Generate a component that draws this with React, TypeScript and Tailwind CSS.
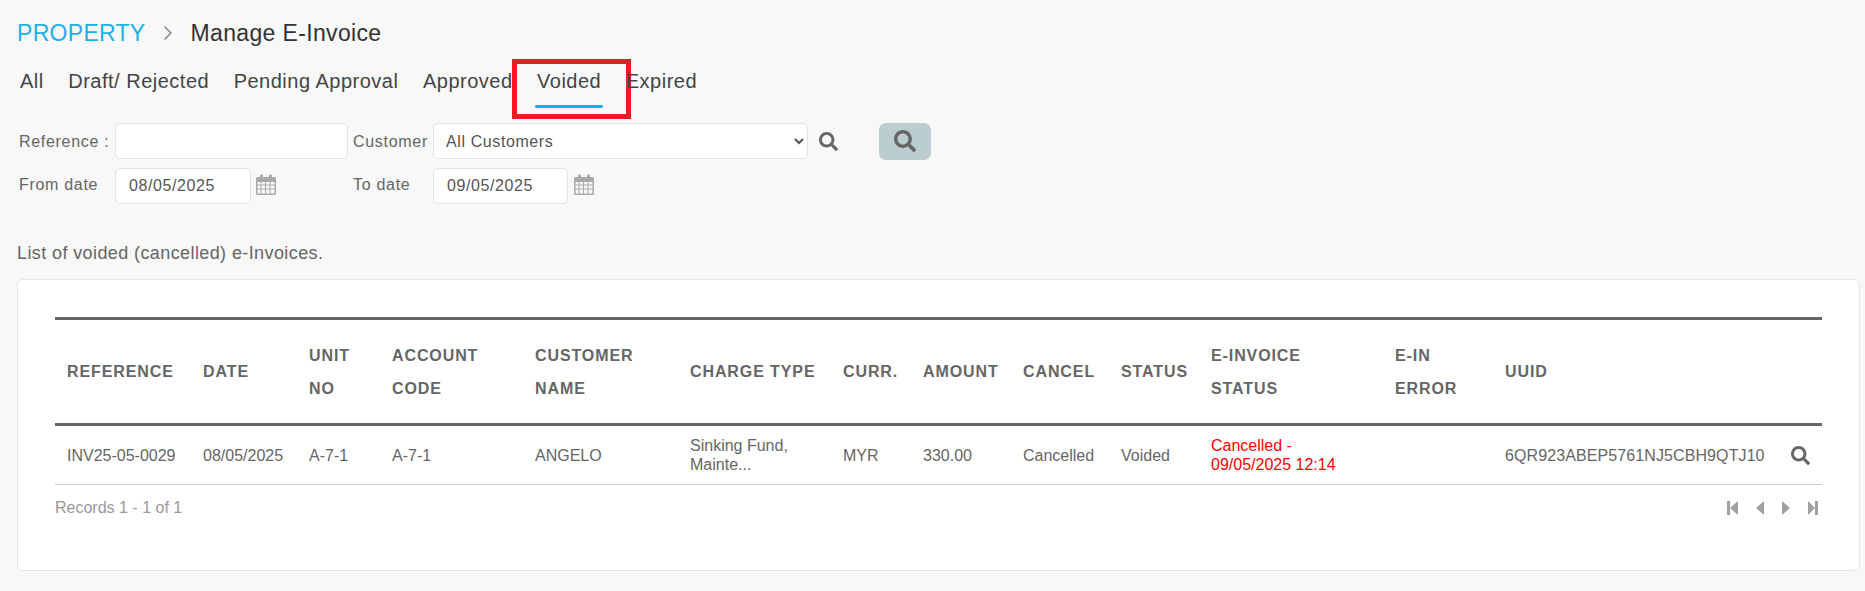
import React from "react";
import { FaSearch } from "react-icons/fa";
import { ChevronRight } from "lucide-react";

const TABS = ["All", "Draft/ Rejected", "Pending Approval", "Approved", "Voided", "Expired"];

const COLUMNS = [
  { width: "w-[136px]", label: ["REFERENCE"] },
  { width: "w-[106px]", label: ["DATE"] },
  { width: "w-[83px]", label: ["UNIT", "NO"] },
  { width: "w-[143px]", label: ["ACCOUNT", "CODE"] },
  { width: "w-[155px]", label: ["CUSTOMER", "NAME"] },
  { width: "w-[153px]", label: ["CHARGE TYPE"] },
  { width: "w-[80px]", label: ["CURR."] },
  { width: "w-[100px]", label: ["AMOUNT"] },
  { width: "w-[98px]", label: ["CANCEL"] },
  { width: "w-[90px]", label: ["STATUS"] },
  { width: "w-[184px]", label: ["E-INVOICE", "STATUS"] },
  { width: "w-[110px]", label: ["E-IN", "ERROR"] },
  { width: "w-[286px]", label: ["UUID"] },
  { width: "w-[43px]", label: [] as string[] },
];

const CalendarIcon = () => (
  <svg width="20" height="21" viewBox="0 0 20 21" className="shrink-0 text-[#aaaaaa]">
    <path
      fill="currentColor"
      fillRule="evenodd"
      d="M1.5 3H4V1.5a1 1 0 0 1 1-1h1a1 1 0 0 1 1 1V3h6V1.500a1 1 0 0 1 1-1h1a1 1 0 0 1 1 1V3h2.500A1.500 1.500 0 0 1 20 4.500V19.500A1.500 1.500 0 0 1 18.500 21H1.500A1.500 1.500 0 0 1 0 19.500V4.500A1.500 1.500 0 0 1 1.500 3ZM1.500 8v2.500H4.500V8ZM5.500 8v2.500H9V8ZM10 8v2.500H13.500V8ZM14.500 8v2.500H18.500V8ZM1.500 11.500v3H4.500v-3ZM5.500 11.500v3H9v-3ZM10 11.500v3H13.500v-3ZM14.500 11.500v3H18.500v-3ZM1.500 15.500v4H4.500v-4ZM5.500 15.500v4H9v-4ZM10 15.500v4H13.500v-4ZM14.500 15.500v4H18.500v-4Z"
    />
  </svg>
);

const PagerIcon = ({ w, d }: { w: number; d: string }) => (
  <svg width={w} height="14" viewBox={`0 0 ${w} 14`} className="text-[#a0a0a0]">
    <path fill="currentColor" d={d} />
  </svg>
);

const inputClass =
  "h-9 rounded-[5px] border border-[#e3e3e3] bg-white px-[13px] text-[16px] tracking-[0.6px] text-[#555555] outline-none";

export default function App() {
  return (
    <div className="min-h-[591px] bg-[#f8f8f8] pl-[17px] pr-[5px] font-['Liberation_Sans',Arial,sans-serif] text-[#666666]">
      {/* breadcrumb */}
      <div className="flex h-[66px] items-center text-[23px] tracking-[0.3px]">
        <span className="text-[#1cb0e6]">PROPERTY</span>
        <ChevronRight size={24} className="ml-[10px] mr-[11px] text-[#888888]" strokeWidth={1.5} />
        <span className="tracking-[0.35px] text-[#333333]">Manage E-Invoice</span>
      </div>

      {/* status tabs */}
      <div className="flex h-[57px] items-start pl-[3px] text-[20px] tracking-[0.5px] text-[#444444]">
        {TABS.map((tab) => (
          <div key={tab} className="relative mr-[24.500px]">
            <span className="leading-[29px]">{tab}</span>
            {tab === "Voided" && (
              <>
                <div className="absolute left-[-2px] right-[-2px] top-[39px] h-[3px] rounded-full bg-[#0db4ea]" />
                <div className="absolute left-[-25px] right-[-30px] top-[-7px] h-[60px] border-[5px] border-[#ed1c24]" />
              </>
            )}
          </div>
        ))}
      </div>

      {/* filters */}
      <div className="flex h-[36px] items-center text-[16px] tracking-[0.7px]">
        <label className="mt-[2px] w-[98px] pl-[2px]">Reference :</label>
        <input className={`${inputClass} w-[233px]`} />
        <label className="ml-[5px] mt-[2px] w-[80px]">Customer</label>
        <select className={`${inputClass} w-[375px] !pl-[8px]`} defaultValue="All Customers">
          <option>All Customers</option>
        </select>
        <FaSearch size={19} className="ml-[11px] text-[#666666]" />
        <button className="ml-[41px] flex h-[37px] w-[52px] items-center justify-center rounded-[7px] bg-[#bccdd0]">
          <FaSearch size={22} className="text-[#666666]" />
        </button>
      </div>
      <div className="mt-[9px] flex h-[36px] items-center text-[16px] tracking-[0.7px]">
        <label className="mb-[2px] w-[98px] pl-[2px]">From date</label>
        <input className={`${inputClass} w-[136px]`} defaultValue="08/05/2025" readOnly />
        <span className="mb-[3px] ml-[5px]">
          <CalendarIcon />
        </span>
        <label className="mb-[2px] ml-[77px] w-[80px]">To date</label>
        <input className={`${inputClass} w-[135px]`} defaultValue="09/05/2025" readOnly />
        <span className="mb-[3px] ml-[6px]">
          <CalendarIcon />
        </span>
      </div>

      <p className="mt-[39px] text-[18px] leading-[20px] tracking-[0.4px]">
        List of voided (cancelled) e-Invoices.
      </p>

      {/* table card */}
      <div className="mt-[16px] h-[292px] rounded-[6px] border border-[#e6e6e6] bg-white pl-[37px] pr-[37px] pt-[37px]">
        <table className="w-[1767px] table-fixed border-collapse text-[16px]">
          <thead>
            <tr className="h-[106px] border-y-[3px] border-[#666666]">
              {COLUMNS.map((col, i) => (
                <th
                  key={i}
                  className={`${col.width} px-3 text-left text-[16px] font-bold leading-[33px] tracking-[0.9px] text-[#666666]`}
                >
                  {col.label.map((line) => (
                    <div key={line}>{line}</div>
                  ))}
                </th>
              ))}
            </tr>
          </thead>
          <tbody>
            <tr className="h-[60px] border-b border-[#cccccc] leading-[19px]">
              <td className="whitespace-nowrap px-3">INV25-05-0029</td>
              <td className="whitespace-nowrap px-3">08/05/2025</td>
              <td className="px-3">A-7-1</td>
              <td className="px-3">A-7-1</td>
              <td className="px-3">ANGELO</td>
              <td className="px-3">
                Sinking Fund,
                <br />
                Mainte...
              </td>
              <td className="px-3">MYR</td>
              <td className="px-3">330.00</td>
              <td className="px-3">Cancelled</td>
              <td className="px-3">Voided</td>
              <td className="whitespace-nowrap px-3 text-[#ff0000]">
                Cancelled -
                <br />
                09/05/2025 12:14
              </td>
              <td className="px-3"></td>
              <td className="whitespace-nowrap px-3 tracking-[0.1px]">6QR923ABEP5761NJ5CBH9QTJ10</td>
              <td className="px-3">
                <FaSearch size={19} className="text-[#666666]" />
              </td>
            </tr>
          </tbody>
        </table>

        {/* pager */}
        <div className="flex h-[46px] w-[1767px] items-center justify-between text-[16px] text-[#999999]">
          <span>Records 1 - 1 of 1</span>
          <div className="mr-[4px] flex items-center gap-[18px]">
            <PagerIcon w={11} d="M0 0h3v14H0zM3 7l8-7v14z" />
            <PagerIcon w={8} d="M0 7l8-7v14z" />
            <PagerIcon w={8} d="M0 0l8 7-8 7z" />
            <PagerIcon w={10} d="M7 0h3v14H7zM0 0l7 7-7 7z" />
          </div>
        </div>
      </div>
    </div>
  );
}
